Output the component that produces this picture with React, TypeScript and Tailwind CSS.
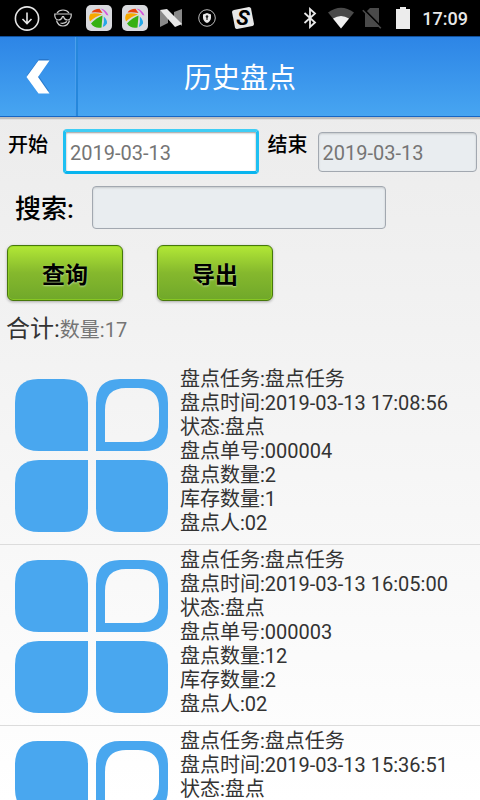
import type { ReactNode } from 'react';
import { clsx } from 'clsx';

interface StockRecord {
    id: string;
    task: string;
    time: string;
    status: string;
    counted: number;
    inStock: number;
    user: string;
}

const records: StockRecord[] = [
    { id: '000004', task: '盘点任务', time: '2019-03-13 17:08:56', status: '盘点', counted: 2, inStock: 1, user: '02' },
    { id: '000003', task: '盘点任务', time: '2019-03-13 16:05:00', status: '盘点', counted: 12, inStock: 2, user: '02' },
    { id: '000002', task: '盘点任务', time: '2019-03-13 15:36:51', status: '盘点', counted: 3, inStock: 2, user: '02' },
];

function Slot({ children }: { children: ReactNode }) {
    return <span className="flex w-9 shrink-0 items-center justify-center">{children}</span>;
}

function RightSlot({ children }: { children: ReactNode }) {
    return <span className="flex w-[31px] shrink-0 items-center justify-center">{children}</span>;
}

function BallIcon() {
    return (
        <svg width="26" height="26" viewBox="0 0 26 26" aria-hidden="true">
            <rect width="26" height="26" rx="5" fill="#d9dade" />
            <path d="M5.500 7.500Q8 3.800 13.500 3.800L16.500 8Q10 6.800 5.500 7.500Z" fill="#e8420c" />
            <path d="M4.500 8.800Q10 7.600 16 9.500Q9 11.500 4 16.500Q2.200 12 4.500 8.800Z" fill="#f5a800" />
            <path d="M14.500 3.500Q20 4.500 22.500 10.500L20.500 10Q18.500 6 14.500 3.500Z" fill="#d454dd" />
            <path d="M16.500 10.500L15.500 22.500Q9 24 5 18.500Q10 13 16.500 10.500Z" fill="#35b011" />
            <path d="M17.800 11.500Q21.500 15 21 18.500Q19.500 21 16.800 22Q18.500 17 17.800 11.500Z" fill="#25a8e8" />
        </svg>
    );
}

function StatusBar() {
    return (
        <div className="flex h-9 shrink-0 items-center justify-between bg-black pr-3 pl-[9px]">
            <div className="flex items-center">
                <Slot>
                    <svg width="26" height="26" viewBox="0 0 26 26" fill="none" stroke="#e6e6e6" strokeWidth="1.6" aria-hidden="true">
                        <circle cx="13" cy="13.500" r="11.600" />
                        <path d="M13 7.500V18.500M8.500 14L13 18.500L17.500 14" />
                    </svg>
                </Slot>
                <Slot>
                    <svg width="18" height="18" viewBox="0 0 18 18" fill="none" stroke="#cfcfcf" strokeWidth="1.200" aria-hidden="true">
                        <path d="M3 4Q5 1 9 1Q13 1 15 4M2.500 11.500Q4 17 9 17Q14 17 15.500 11.500" />
                        <path d="M.8 5H17.200V7Q16.500 11 13.500 11Q10.500 11 9.500 7.500H8.500Q7.500 11 4.500 11Q1.500 11 .8 7Z" />
                        <path d="M6.500 14Q10 15 13 12.500" />
                    </svg>
                </Slot>
                <Slot><BallIcon /></Slot>
                <Slot><BallIcon /></Slot>
                <Slot>
                    <svg width="22" height="18" viewBox="0 0 22 18" aria-hidden="true">
                        <path d="M0 1L8 8V14L0 18Z" fill="#888" />
                        <path d="M22 0V17L14 10V3Z" fill="#888" />
                        <path d="M0 1L7 0L22 15L15 18Z" fill="#e8e8e8" />
                    </svg>
                </Slot>
                <Slot>
                    <svg width="18" height="18" viewBox="0 0 18 18" aria-hidden="true">
                        <circle cx="9" cy="9" r="8.300" fill="none" stroke="#bbb" strokeWidth="1" />
                        <path d="M9 4L13 5.500V9Q12.500 12.500 9 14Q5.500 12.500 5 9V5.500Z" fill="#e8e8e8" />
                        <path d="M9 7V11" stroke="#222" strokeWidth="1.200" />
                        <circle cx="9" cy="7.500" r="1.300" fill="#222" />
                    </svg>
                </Slot>
                <Slot>
                    <svg width="24" height="24" viewBox="0 0 24 24" aria-hidden="true">
                        <path d="M3 4L18 1Q19.500 1 20 2.500L23 18Q23 19.500 21.500 20L6 23Q4.500 23 4 21.500L1 6Q1 4.500 3 4Z" fill="#e8e8e8" />
                        <text x="12" y="19" textAnchor="middle" transform="rotate(8 12 12)" className="font-['Roboto'] text-[21px] font-bold italic" fill="#000">S</text>
                    </svg>
                </Slot>
            </div>
            <div className="flex items-center">
                <RightSlot>
                    <svg width="14" height="22" viewBox="0 0 14 22" fill="none" stroke="#e8e8e8" strokeWidth="1.800" aria-hidden="true">
                        <path d="M1.500 6L12 15.500L7 20V2L12 6.500L1.500 16" />
                    </svg>
                </RightSlot>
                <RightSlot>
                    <svg width="26" height="22" viewBox="0 0 26 22" aria-hidden="true">
                        <path d="M0 5.500Q13 -4 26 5.500L13 21.500Z" fill="#4a4a4a" />
                        <path d="M5 11.500Q13 6.500 21 11.500L13 21.500Z" fill="#f0f0f0" />
                    </svg>
                </RightSlot>
                <RightSlot>
                    <svg width="20" height="22" viewBox="0 0 20 22" aria-hidden="true">
                        <path d="M8 1H17V20H3V6Z" fill="#4a4a4a" />
                        <path d="M2 2.500L20 20.500" stroke="#000" strokeWidth="1.800" />
                        <path d="M.8 3.200L18.800 21.200" stroke="#4a4a4a" strokeWidth="1.600" />
                    </svg>
                </RightSlot>
                <RightSlot>
                    <svg width="14" height="22" viewBox="0 0 14 22" aria-hidden="true">
                        <path d="M4 0H10V2H14V22H0V2H4Z" fill="#ececec" />
                    </svg>
                </RightSlot>
                <span className="ml-1 pt-px text-lg font-medium text-[#e8e8e8]">17:09</span>
            </div>
        </div>
    );
}

function Header() {
    return (
        <header className="flex h-[81px] shrink-0 border-t border-b border-t-[#10509c] border-b-[#1766c4] bg-linear-to-b from-[#2d85e6] to-[#47a5f1]">
            <button type="button" aria-label="返回" className="flex w-[76px] items-center justify-center border-r border-[#4b9fec]">
                <svg width="26" height="36" viewBox="0 0 26 36" aria-hidden="true">
                    <path d="M14 0H24L13 16L24 32H14L2 16Z" fill="#1c5fae" opacity=".5" />
                    <path d="M13.500 1.500H24.500L13 18L24.500 34.500H13.500L1.500 18Z" fill="#fff" />
                </svg>
            </button>
            <h1 className="flex flex-1 items-center justify-center border-l-2 border-[#2587dc] pt-1 pr-[78px] text-[28px] text-white">
                历史盘点
            </h1>
        </header>
    );
}

function GreenButton({ children }: { children: ReactNode }) {
    return (
        <button
            type="button"
            className="h-14 w-[116px] rounded-md border border-[#47780c] bg-linear-to-b from-[#b2e836] via-[#85b82d] to-[#70a82a] pt-1.5 text-[23px] font-bold text-black shadow-[0_1px_3px_rgba(0,0,0,0.3),inset_0_0_0_1px_rgba(150,220,30,0.6)] text-shadow-[0_1px_2px_rgba(255,255,255,0.5)]"
        >
            {children}
        </button>
    );
}

function DateField({ id, label, active }: { id: string; label: string; active?: boolean }) {
    return (
        <>
            <label htmlFor={id} className="shrink-0 self-start pt-1 text-xl leading-6 font-medium text-black">
                {label}
            </label>
            <input
                id={id}
                type="text"
                defaultValue="2019-03-13"
                className={clsx(
                    'min-w-0 rounded pt-0.5 text-xl text-[#757575] outline-none',
                    active
                        ? 'mr-2 ml-[15px] h-[45px] flex-[194] border-[3px] border-t-[#3fcdf5] border-r-[#1fc0f2] border-b-[#08b4ee] border-l-[#1fc0f2] bg-white px-1 shadow-[inset_0_1px_2px_rgba(0,0,0,0.4)]'
                        : 'ml-[11px] h-10 flex-[160] border border-[#a2a8b0] bg-[#e9edf0] px-[3px] shadow-[inset_0_1px_2px_rgba(0,0,0,0.15)]'
                )}
            />
        </>
    );
}

function GridIcon() {
    return (
        <svg width="156" height="156" viewBox="0 0 156 156" fill="#49a7ef" className="shrink-0" aria-hidden="true">
            <path d="M24 1H50Q74 1 74 25V73H25Q1 73 1 49V25Q1 1 24 1Z" />
            <path d="M106 1H130Q154 1 154 25V49Q154 73 130 73H82V25Q82 1 106 1ZM112 10Q91 10 91 32V64H124Q145 64 145 44V30Q145 10 124 10Z" fillRule="evenodd" />
            <path d="M25 82H74V130Q74 154 50 154H25Q1 154 1 130V106Q1 82 25 82Z" />
            <path d="M82 82H130Q154 82 154 106V130Q154 154 130 154H106Q82 154 82 130Z" />
        </svg>
    );
}

function RecordRow({ record }: { record: StockRecord }) {
    return (
        <li className="flex border-b border-[#dcdcdc] pt-[3px] pr-2 pb-[9px] pl-3.5">
            <div className="pt-[11px]">
                <GridIcon />
            </div>
            <div className="ml-2.5 min-w-0 text-xl leading-6 text-[#333]">
                <p>盘点任务:{record.task}</p>
                <p>盘点时间:{record.time}</p>
                <p>状态:{record.status}</p>
                <p>盘点单号:{record.id}</p>
                <p>盘点数量:{record.counted}</p>
                <p>库存数量:{record.inStock}</p>
                <p>盘点人:{record.user}</p>
            </div>
        </li>
    );
}

export default function App() {
    return (
        <div className="flex h-screen flex-col overflow-hidden bg-linear-to-b from-[#e9e9e9] to-white font-['Roboto','Noto_Sans_CJK_SC',sans-serif]">
            <StatusBar />
            <Header />

            <main className="flex min-h-0 flex-1 flex-col border-t-2 border-[#bfbfbf]">
                <form className="shrink-0 border-t border-[#e0e0e0]" onSubmit={(e) => e.preventDefault()}>
                    <div className="flex items-center pt-[9px] pr-[3px] pl-2">
                        <DateField id="start" label="开始" active />
                        <DateField id="end" label="结束" />
                    </div>

                    <div className="mt-3 flex items-center pl-[15px]">
                        <label htmlFor="search" className="pt-0.5 text-[26px] leading-8 font-medium text-black">
                            搜索:
                        </label>
                        <input
                            id="search"
                            type="text"
                            className="ml-[18px] h-[43px] w-[294px] rounded border border-[#a2a8b0] bg-[#e9edf0] px-1 text-xl shadow-[inset_0_1px_2px_rgba(0,0,0,0.15)] outline-none"
                        />
                    </div>

                    <div className="mt-4 flex gap-[34px] pl-[7px]">
                        <GreenButton>查询</GreenButton>
                        <GreenButton>导出</GreenButton>
                    </div>
                </form>

                <p className="mt-3 flex shrink-0 items-baseline pl-1.5 leading-8">
                    <span className="text-2xl leading-8 text-[#333]">合计:</span>
                    <span className="text-xl leading-8 text-[#757575]">数量:17</span>
                </p>

                <ul className="mt-[18px] min-h-0 flex-1 overflow-y-auto [scrollbar-width:none]">
                    {records.map((record) => (
                        <RecordRow key={record.id} record={record} />
                    ))}
                </ul>
            </main>
        </div>
    );
}
